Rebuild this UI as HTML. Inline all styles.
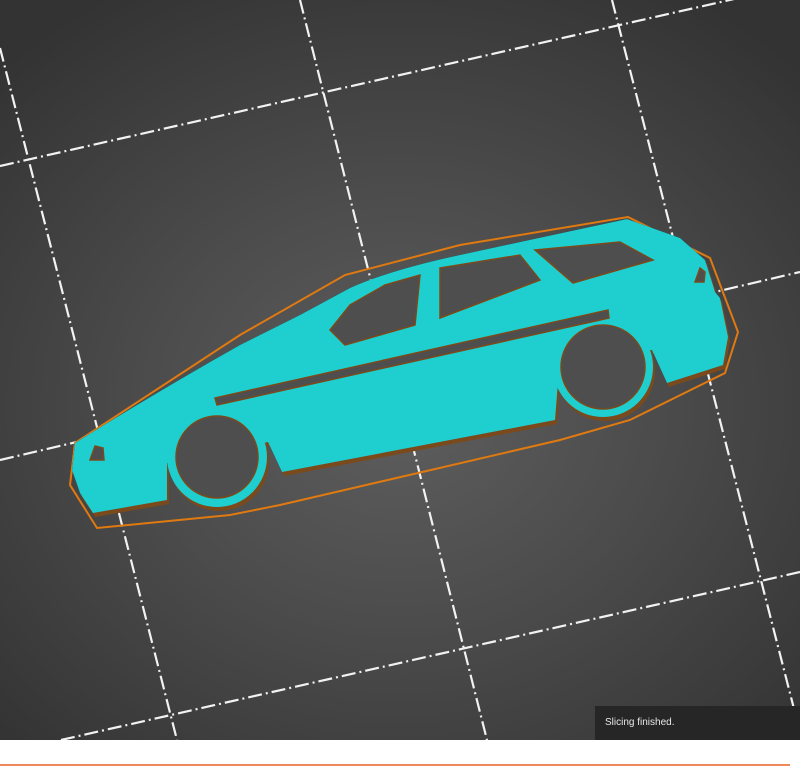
<!DOCTYPE html>
<html><head><meta charset="utf-8"><style>
html,body{margin:0;padding:0;width:800px;height:770px;overflow:hidden;background:#fff}
#v{position:absolute;left:0;top:0;width:800px;height:740px;background:radial-gradient(ellipse 70% 65% at 50% 55%,#5e5e5e 0%,#4c4c4c 45%,#3a3a3a 85%,#333 100%)}
#toast{position:absolute;left:595px;top:706px;width:205px;height:34px;background:#262626;color:#e8e8e8;font:10px "Liberation Sans",sans-serif;line-height:34px;padding-left:10px;box-sizing:border-box}
#line{position:absolute;left:0;top:764px;width:790px;height:2px;background:#f08a5a}
</style></head><body>
<div id="v">
<svg width="800" height="740" viewBox="0 0 800 740" style="position:absolute;left:0;top:0">
<g stroke="#f2f2f2" stroke-width="2.2" stroke-dasharray="14 4 2 4" fill="none">
<line x1="0" y1="48" x2="177" y2="740"/>
<line x1="300" y1="0" x2="487" y2="740"/>
<line x1="612" y1="0" x2="802" y2="740"/>
<line x1="0" y1="166" x2="800" y2="-16"/>
<line x1="0" y1="460" x2="800" y2="272"/>
<line x1="61" y1="740" x2="800" y2="572"/>
</g>
<path d="M97,528 L70,485 L75,443 L240,335 L345,275 L460,245 L628,217 L710,258 L738,332 L725,373 L630,420 L560,440 L280,505 L230,515 Z" fill="none" stroke="#e07a10" stroke-width="2"/>
<g id="car">
<path d="M75,443 Q160,390 240,345 L300,315 L350,288 Q390,270 460,255 L627,219 L680,238 L705,260 L715,292 L720,298 L728,337 L723,365 L667,383 L652,350 L560,357 L555,420 L282,472 L268,442 L167,463 L167,500 L93,513 L80,493 L72,470 Z"/>
<circle cx="217" cy="457" r="50"/>
<circle cx="603" cy="367" r="50"/>
</g>
<use href="#car" transform="translate(2,4)" fill="#7a4a1c"/>
<use href="#car" fill="#1fcfcf"/>
<g fill="#4e4e4e" stroke="#7a4a1c" stroke-width="1.5">
<circle cx="217" cy="457" r="41"/>
<circle cx="603" cy="367" r="42"/>
<path d="M535,250 L620,242 L653,260 L573,283 Z"/>
<path d="M440,268 L520,255 L540,280 L440,318 Z"/>
<path d="M420,275 L415,325 L345,345 L330,330 L350,305 L385,285 Z"/>
<path d="M215,398 L608,310 L609,318 L217,405 Z"/>
<path d="M95,446 L103,448 L104,460 L90,460 Z"/>
<path d="M700,268 L705,272 L704,282 L695,282 Z"/>
</g>
</svg>
<div id="toast">Slicing finished.</div>
</div>
<div id="line"></div>
</body></html>
